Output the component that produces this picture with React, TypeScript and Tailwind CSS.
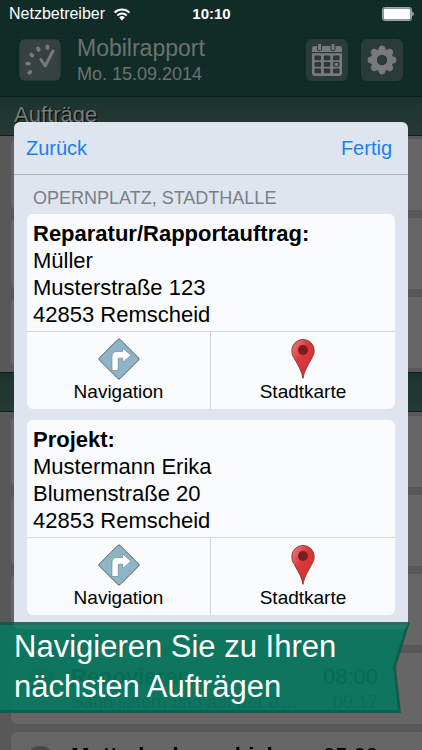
import { useId } from "react";

function WifiIcon() {
  return (
    <svg viewBox="0 0 18 13" className="h-[13px] w-[18px]" fill="none" stroke="white" strokeWidth="2" aria-hidden="true">
      <path d="M1.6 4.6a10.6 10.6 0 0 1 14.8 0" />
      <path d="M4.3 7.5a6.8 6.8 0 0 1 9.4 0" />
      <path d="M9 12.4 6.2 9.4a4.1 4.1 0 0 1 5.6 0Z" fill="white" stroke="none" />
    </svg>
  );
}

function BatteryIcon() {
  return (
    <svg viewBox="0 0 32 14" className="h-[14px] w-8" aria-hidden="true">
      <rect x="0.5" y="0.5" width="29" height="13" rx="2" fill="none" stroke="#9aa8a5" />
      <rect x="1.5" y="1.5" width="27" height="11" rx="1" fill="white" />
      <path d="M30.5 4.8c1.4.6 1.4 3.8 0 4.4Z" fill="white" />
    </svg>
  );
}

function LogoIcon() {
  return (
    <svg viewBox="0 0 42 42" className="size-[42px] shrink-0" aria-hidden="true">
      <rect x="0.5" y="0.5" width="41" height="41" rx="5" fill="#36423f" />
      <g stroke="#77797a" strokeWidth="3.8" strokeLinecap="round" fill="none">
        <path d="M28.4 7.4v1.6M19 9.4l.8 1.4M12.2 15.6l1.2 1M8.4 24.6h1.6M10.2 33.8l1.2-.8" />
        <path d="M21.8 20.5l4.4 6.5L34 12" strokeWidth="3" strokeLinejoin="round" />
      </g>
    </svg>
  );
}

function CalendarIcon() {
  const cols = [8.5, 17.8, 27];
  const rows = [16.5, 23, 29.5];
  return (
    <svg viewBox="0 0 42 42" className="size-[42px]" aria-hidden="true">
      <rect x="6" y="7" width="30" height="30" rx="3" fill="#77797a" />
      <rect x="6" y="13" width="30" height="1.2" fill="#2b3835" />
      <rect x="11.5" y="4.5" width="4" height="7" rx="1" fill="#77797a" stroke="#2b3835" />
      <rect x="25" y="4.5" width="4" height="7" rx="1" fill="#77797a" stroke="#2b3835" />
      {rows.map((y) =>
        cols.map((x) => <rect key={`${x}-${y}`} x={x} y={y} width="6.5" height="4.8" rx="1" fill="#2b3835" />)
      )}
      <rect x="28.5" y="24" width="3.6" height="2.8" fill="#77797a" />
    </svg>
  );
}

function GearIcon() {
  const teeth = [0, 45, 90, 135, 180, 225, 270, 315];
  return (
    <svg viewBox="0 0 42 42" className="size-[42px]" aria-hidden="true">
      <g fill="#77797a">
        {teeth.map((angle) => (
          <path key={angle} d="M16.6 12 18.6 7.2Q21 6 23.4 7.2L25.4 12Z" transform={`rotate(${angle} 21 21)`} />
        ))}
      </g>
      <circle cx="21" cy="21" r="8.1" fill="none" stroke="#77797a" strokeWidth="5.8" />
    </svg>
  );
}

function NavigationIcon() {
  return (
    <svg viewBox="0 0 42 42" className="size-[42px]" aria-hidden="true">
      <rect x="6.4" y="6.4" width="29.2" height="29.2" rx="1.5" transform="rotate(45 21 21)" fill="#8db5c7" stroke="#4d5a61" strokeWidth="0.9" />
      <path
        d="M14 32.5V18.5q0-5 5-5h5.7v-3.6l8.2 7.3-8.2 7.2v-4.2h-3.7q-.8 0-.8.8v11.5Z"
        fill="white"
        stroke="#5f7c8a"
        strokeWidth="0.6"
      />
    </svg>
  );
}

function PinIcon() {
  const id = useId();
  return (
    <svg viewBox="0 0 24 42" className="h-[42px] w-6" aria-hidden="true">
      <defs>
        <linearGradient id={id} x1="0" y1="0" x2="1" y2="1">
          <stop offset="0" stopColor="#ee8580" />
          <stop offset="0.4" stopColor="#dc3a3c" />
          <stop offset="1" stopColor="#cf2c2e" />
        </linearGradient>
      </defs>
      <path
        d="M12 40.4C11 33 6.8 27 3.3 20.4A11 11 0 0 1 .8 12.6a11.2 11.2 0 0 1 22.4 0c0 3-1 5.3-2.5 7.8C17.2 27 13 33 12 40.4Z"
        fill={`url(#${id})`}
        stroke="#7a2a2a"
        strokeWidth="0.8"
      />
      <circle cx="12" cy="12" r="5" fill="#7c1c20" />
    </svg>
  );
}

const EMPTY_ROWS = [0, 1, 2];

function SectionBar({ title }: { title?: string }) {
  return (
    <div className="h-10 shrink-0 border-y border-[#0a211c] bg-linear-to-b from-[#1b332e] to-[#263a36] px-3.5 leading-9">
      {title && <h2 className="text-[22px] text-[#77797a] [text-shadow:1px_1px_1px_black]">{title}</h2>}
    </div>
  );
}

type Order = { title: string; detail?: string; start: string; end?: string };

function OrderRow({ order }: { order?: Order }) {
  return (
    <li className="flex h-[71px] shrink-0 gap-4 rounded-l-md bg-[#666] pl-[15px] pr-11">
      {order && (
        <>
          <span className="mt-3.5 size-[29px] shrink-0 rounded-full bg-[#484848]" />
          <div className="min-w-0 flex-1 pt-2 whitespace-nowrap text-black">
            <div className="flex justify-between text-[22px] leading-8">
              <b>{order.title}</b>
              <span>{order.start}</span>
            </div>
            {order.detail && (
              <div className="flex justify-between text-[18px] leading-[18px] text-[#222]">
                <span>{order.detail}</span>
                <span>{order.end}</span>
              </div>
            )}
          </div>
        </>
      )}
    </li>
  );
}

function AddressCard({ title, lines }: { title: string; lines: string[] }) {
  return (
    <article className="overflow-hidden rounded-md bg-[#f9fbfd]">
      <div className="px-1.5 pt-1.5 pb-[3px] text-[22px] leading-[27px] text-black">
        <h3 className="font-bold">{title}</h3>
        {lines.map((line) => (
          <p key={line}>{line}</p>
        ))}
      </div>
      <div className="grid grid-cols-2 divide-x divide-[#d3d6da] border-t border-[#d3d6da] text-[19px] leading-6 text-black">
        <button type="button" className="flex flex-col items-center pt-1.5 pb-[5px]">
          <NavigationIcon />
          Navigation
        </button>
        <button type="button" className="flex flex-col items-center pt-1.5 pb-[5px]">
          <PinIcon />
          Stadtkarte
        </button>
      </div>
    </article>
  );
}

export default function App() {
  return (
    <div className="relative h-screen overflow-hidden bg-[#585858] font-['Liberation_Sans',Arial,sans-serif]">
      <header className="flex h-24 flex-col bg-[#102c27] bg-[repeating-linear-gradient(0deg,#ffffff03_0_1px,transparent_1px_4px),repeating-linear-gradient(90deg,#0000000c_0_1px,transparent_1px_4px)]">
        <div className="grid h-7 grid-cols-3 items-center pl-[9px] pr-2 text-white">
          <span className="flex items-center gap-2 text-[16px]">
            Netzbetreiber <WifiIcon />
          </span>
          <b className="text-center text-[15px]">10:10</b>
          <span className="flex justify-end">
            <BatteryIcon />
          </span>
        </div>
        <div className="flex flex-1 items-center gap-4 px-[19px] pb-1 text-[#6b7270]">
          <LogoIcon />
          <div className="flex-1 whitespace-nowrap">
            <h1 className="text-[23px] leading-7">Mobilrapport</h1>
            <p className="text-[18px] leading-6">Mo. 15.09.2014</p>
          </div>
          <div className="flex gap-[13px]">
            <button type="button" aria-label="Kalender" className="rounded-md bg-[#2b3c38]">
              <CalendarIcon />
            </button>
            <button type="button" aria-label="Einstellungen" className="rounded-md bg-[#2b3c38]">
              <GearIcon />
            </button>
          </div>
        </div>
      </header>

      <main>
        <SectionBar title="Aufträge" />
        <ul className="flex flex-col gap-2 pt-[3px] pb-1 pl-[11px]">
          {EMPTY_ROWS.map((row) => (
            <OrderRow key={row} />
          ))}
        </ul>
        <SectionBar />
        <ul className="flex flex-col gap-2 pt-1 pl-[11px]">
          {EMPTY_ROWS.map((row) => (
            <OrderRow key={row} />
          ))}
          <OrderRow order={{ title: "Renovieren", detail: "Sand liefern und auf der B…", start: "08:00", end: "09:17" }} />
          <OrderRow order={{ title: "Mutterboden schieb", start: "05:00" }} />
        </ul>
      </main>

      <section role="dialog" aria-label="Adressen" className="absolute inset-x-3.5 top-[122px] rounded-md bg-[#dfe5ee] pb-3.5">
        <div className="flex h-[53px] items-center justify-between border-b border-[#aeb2b8] pl-3 pr-4 text-[20px] text-[#1a80f0]">
          <button type="button">Zurück</button>
          <button type="button">Fertig</button>
        </div>
        <div className="px-[13px]">
          <h2 className="px-1.5 pt-[11px] pb-1 text-[18px] leading-6 text-[#7b7f86]">OPERNPLATZ, STADTHALLE</h2>
          <div className="flex flex-col gap-[11px]">
            <AddressCard title="Reparatur/Rapportauftrag:" lines={["Müller", "Musterstraße 123", "42853 Remscheid"]} />
            <AddressCard title="Projekt:" lines={["Mustermann Erika", "Blumenstraße 20", "42853 Remscheid"]} />
          </div>
        </div>
      </section>

      <aside className="absolute top-[622px] left-0 w-[410px] bg-[#075a4a]/85 [clip-path:polygon(0_0,100%_0,396px_45px,401px_100%,0_100%)]">
        <div className="my-[3px] bg-[#059b7a]/40 px-3.5 pt-0.5 pb-[3px] text-[31px] leading-10 text-white [clip-path:polygon(0_0,406px_0,393px_42px,398px_100%,0_100%)]">
          <p>Navigieren Sie zu Ihren</p>
          <p>nächsten Aufträgen</p>
        </div>
      </aside>
    </div>
  );
}
